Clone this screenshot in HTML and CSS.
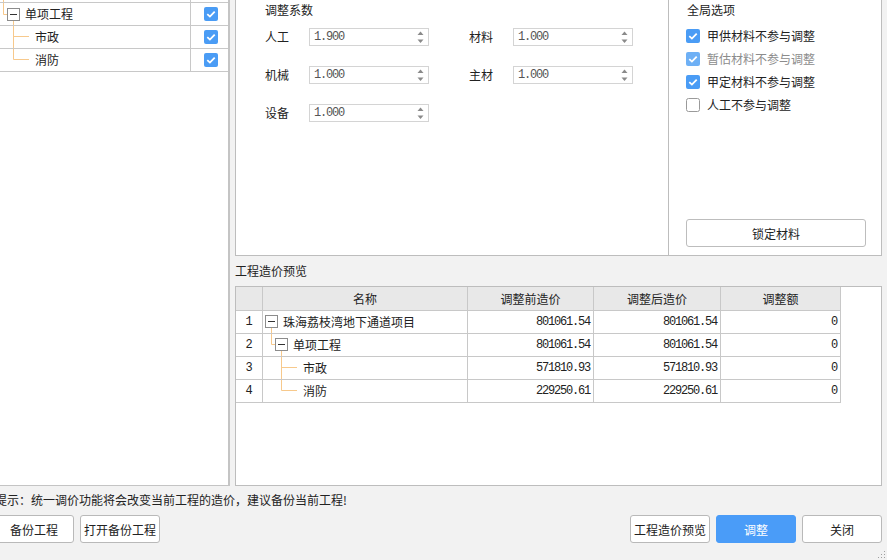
FILE: index.html
```html
<!DOCTYPE html>
<html lang="zh-CN">
<head>
<meta charset="utf-8">
<title>统一调价</title>
<link rel="stylesheet" href="styles.css">
</head>
<body>
<div class="main">
  <div class="tree-panel">
    <div class="trow first">
      <div class="tname"><svg class="tl" width="10" height="2" viewBox="0 0 10 2"><path d="M3.5 0V2" stroke="#f7c98c" fill="none"/></svg></div>
      <div class="tchk"></div>
    </div>
    <div class="trow">
      <div class="tname">
        <svg class="tl" width="25" height="22" viewBox="0 0 25 22"><path d="M3.5 0V11.5H7" stroke="#f7c98c" fill="none"/><path d="M13.5 18V22" stroke="#f7c98c" fill="none"/><rect x="7.5" y="5.5" width="12" height="12" fill="#fff" stroke="#8c8c8c"/><path d="M10 11.5H17" stroke="#333" fill="none"/></svg>
        <span>单项工程</span>
      </div>
      <div class="tchk"><svg class="cb" width="14" height="14" viewBox="0 0 14 14"><rect width="14" height="14" rx="2" fill="#4a9cf5"/><path d="M3.3 7.2L5.9 9.6L10.7 4.6" stroke="#fff" stroke-width="1.8" fill="none"/></svg></div>
    </div>
    <div class="trow">
      <div class="tname">
        <svg class="tl" width="35" height="22" viewBox="0 0 35 22"><path d="M13.5 0V22M13.5 10.5H29" stroke="#f7c98c" fill="none"/></svg>
        <span>市政</span>
      </div>
      <div class="tchk"><svg class="cb" width="14" height="14" viewBox="0 0 14 14"><rect width="14" height="14" rx="2" fill="#4a9cf5"/><path d="M3.3 7.2L5.9 9.6L10.7 4.6" stroke="#fff" stroke-width="1.8" fill="none"/></svg></div>
    </div>
    <div class="trow">
      <div class="tname">
        <svg class="tl" width="35" height="22" viewBox="0 0 35 22"><path d="M13.5 0V10.5H29" stroke="#f7c98c" fill="none"/></svg>
        <span>消防</span>
      </div>
      <div class="tchk"><svg class="cb" width="14" height="14" viewBox="0 0 14 14"><rect width="14" height="14" rx="2" fill="#4a9cf5"/><path d="M3.3 7.2L5.9 9.6L10.7 4.6" stroke="#fff" stroke-width="1.8" fill="none"/></svg></div>
    </div>
  </div>

  <div class="right">
    <div class="top-box">
      <div class="coef">
        <div class="title">调整系数</div>
        <div class="coef-grid">
          <span class="lbl">人工</span>
          <div class="num-input"><span class="val">1.900</span><svg class="spin" width="7" height="13" viewBox="0 0 7 13"><path d="M3.5 0.5L6.5 4H0.5Z" fill="#8a8a8a"/><path d="M0.5 8.5H6.5L3.5 12Z" fill="#8a8a8a"/></svg></div>
          <span></span>
          <span class="lbl">材料</span>
          <div class="num-input"><span class="val">1.000</span><svg class="spin" width="7" height="13" viewBox="0 0 7 13"><path d="M3.5 0.5L6.5 4H0.5Z" fill="#8a8a8a"/><path d="M0.5 8.5H6.5L3.5 12Z" fill="#8a8a8a"/></svg></div>

          <span class="lbl">机械</span>
          <div class="num-input"><span class="val">1.000</span><svg class="spin" width="7" height="13" viewBox="0 0 7 13"><path d="M3.5 0.5L6.5 4H0.5Z" fill="#8a8a8a"/><path d="M0.5 8.5H6.5L3.5 12Z" fill="#8a8a8a"/></svg></div>
          <span></span>
          <span class="lbl">主材</span>
          <div class="num-input"><span class="val">1.000</span><svg class="spin" width="7" height="13" viewBox="0 0 7 13"><path d="M3.5 0.5L6.5 4H0.5Z" fill="#8a8a8a"/><path d="M0.5 8.5H6.5L3.5 12Z" fill="#8a8a8a"/></svg></div>

          <span class="lbl">设备</span>
          <div class="num-input"><span class="val">1.000</span><svg class="spin" width="7" height="13" viewBox="0 0 7 13"><path d="M3.5 0.5L6.5 4H0.5Z" fill="#8a8a8a"/><path d="M0.5 8.5H6.5L3.5 12Z" fill="#8a8a8a"/></svg></div>
        </div>
      </div>
      <div class="global">
        <div class="title g">全局选项</div>
        <div class="opts">
          <div class="opt"><svg class="cb" width="14" height="14" viewBox="0 0 14 14"><rect width="14" height="14" rx="2" fill="#4a9cf5"/><path d="M3.3 7.2L5.9 9.6L10.7 4.6" stroke="#fff" stroke-width="1.8" fill="none"/></svg><span>甲供材料不参与调整</span></div>
          <div class="opt disabled"><svg class="cb" width="14" height="14" viewBox="0 0 14 14"><rect width="14" height="14" rx="2" fill="#6eb0f5"/><path d="M3.3 7.2L5.9 9.6L10.7 4.6" stroke="#fff" stroke-width="1.8" fill="none"/></svg><span>暂估材料不参与调整</span></div>
          <div class="opt"><svg class="cb" width="14" height="14" viewBox="0 0 14 14"><rect width="14" height="14" rx="2" fill="#4a9cf5"/><path d="M3.3 7.2L5.9 9.6L10.7 4.6" stroke="#fff" stroke-width="1.8" fill="none"/></svg><span>甲定材料不参与调整</span></div>
          <div class="opt"><svg class="cb" width="14" height="14" viewBox="0 0 14 14"><rect x="0.5" y="0.5" width="13" height="13" rx="2" fill="#fff" stroke="#9a9a9a"/></svg><span>人工不参与调整</span></div>
        </div>
        <button class="lock">锁定材料</button>
      </div>
    </div>

    <div class="section-label">工程造价预览</div>

    <div class="table-box">
      <div class="grid">
        <div class="cell hd"></div>
        <div class="cell hd">名称</div>
        <div class="cell hd">调整前造价</div>
        <div class="cell hd">调整后造价</div>
        <div class="cell hd">调整额</div>

        <div class="cell no">1</div>
        <div class="cell name"><svg class="tl" width="20" height="22" viewBox="0 0 20 22"><path d="M8.5 17V22" stroke="#f7c98c" fill="none"/><rect x="2.5" y="4.5" width="12" height="12" fill="#fff" stroke="#8c8c8c"/><path d="M5 10.5H12" stroke="#333" fill="none"/></svg><span>珠海荔枝湾地下通道项目</span></div>
        <div class="cell money">801061.54</div>
        <div class="cell money">801061.54</div>
        <div class="cell money">0</div>

        <div class="cell no">2</div>
        <div class="cell name"><svg class="tl" width="30" height="22" viewBox="0 0 30 22"><path d="M8.5 0V10.5H12" stroke="#f7c98c" fill="none"/><path d="M18.5 17V22" stroke="#f7c98c" fill="none"/><rect x="12.5" y="4.5" width="12" height="12" fill="#fff" stroke="#8c8c8c"/><path d="M15 10.5H22" stroke="#333" fill="none"/></svg><span>单项工程</span></div>
        <div class="cell money">801061.54</div>
        <div class="cell money">801061.54</div>
        <div class="cell money">0</div>

        <div class="cell no">3</div>
        <div class="cell name"><svg class="tl" width="40" height="22" viewBox="0 0 40 22"><path d="M18.5 0V22M18.5 10.5H34" stroke="#f7c98c" fill="none"/></svg><span>市政</span></div>
        <div class="cell money">571810.93</div>
        <div class="cell money">571810.93</div>
        <div class="cell money">0</div>

        <div class="cell no">4</div>
        <div class="cell name"><svg class="tl" width="40" height="22" viewBox="0 0 40 22"><path d="M18.5 0V10.5H34" stroke="#f7c98c" fill="none"/></svg><span>消防</span></div>
        <div class="cell money">229250.61</div>
        <div class="cell money">229250.61</div>
        <div class="cell money">0</div>
      </div>
    </div>
  </div>
</div>

<div class="hint">提示：统一调价功能将会改变当前工程的造价，建议备份当前工程!</div>

<div class="footer">
  <button class="btn">备份工程</button>
  <button class="btn">打开备份工程</button>
  <span class="spacer"></span>
  <button class="btn">工程造价预览</button>
  <button class="btn primary">调整</button>
  <button class="btn">关闭</button>
</div>

<svg class="grip" width="8" height="8" viewBox="0 0 8 8"><g fill="#a0a0a0"><rect x="6" y="0" width="1" height="1"/><rect x="3" y="3" width="1" height="1"/><rect x="6" y="3" width="1" height="1"/><rect x="0" y="6" width="1" height="1"/><rect x="3" y="6" width="1" height="1"/><rect x="6" y="6" width="1" height="1"/></g></svg>
</body>
</html>
```

FILE: styles.css
```css
* { box-sizing: border-box; }

html, body { margin: 0; padding: 0; }

body {
  width: 887px;
  height: 560px;
  overflow: hidden;
  position: relative;
  background: #f2f2f2;
  font-family: "Noto Sans CJK SC", "Microsoft YaHei", sans-serif;
  font-size: 12px;
  color: #222;
}

.main {
  display: flex;
  gap: 5px;
  height: 486px;
}

/* left tree */
.tree-panel {
  width: 230px;
  height: 486px;
  background: #fff;
  border-right: 2px solid #c4c4c4;
  border-bottom: 1px solid #c4c4c4;
}
.trow {
  display: flex;
  height: 23px;
  border-bottom: 1px solid #c8c8c8;
}
.trow.first { height: 3px; }
.tname {
  width: 191px;
  border-right: 1px solid #c8c8c8;
  display: flex;
  align-items: center;
  white-space: nowrap;
}
.tname span { line-height: 22px; }
.tchk {
  flex: 1;
  display: flex;
  align-items: center;
  justify-content: center;
  padding-left: 2px;
}
.tl { display: block; flex: none; }
.cb { display: block; flex: none; }

/* right side */
.right {
  width: 647px;
  display: flex;
  flex-direction: column;
}
.top-box {
  height: 257px;
  margin-top: -1px;
  border: 1px solid #bdbdbd;
  background: #fff;
  display: flex;
}
.coef {
  width: 433px;
  border-right: 1px solid #bdbdbd;
  padding-left: 29px;
}
.title {
  height: 20px;
  line-height: 20px;
  color: #222;
}
.title.g { padding-left: 1px; }
.coef-grid {
  margin-top: 8px;
  display: grid;
  grid-template-columns: 44px 120px 40px 44px 120px;
  grid-auto-rows: 18px;
  row-gap: 20px;
}
.lbl {
  line-height: 18px;
  color: #222;
}
.num-input {
  height: 18px;
  border: 1px solid #d4d4d4;
  background: #fff;
  display: flex;
  align-items: center;
  padding-left: 4px;
  padding-right: 4px;
}
.val {
  flex: 1;
  font-family: "Liberation Mono", "DejaVu Sans Mono", monospace;
  font-size: 12px;
  letter-spacing: -1.2px;
  color: #555;
}
.spin { display: block; margin-top: 1px; }

.global {
  flex: 1;
  display: flex;
  flex-direction: column;
  padding: 0 15px 8px 17px;
}
.opts { margin-top: 4px; }
.opt {
  height: 23px;
  display: flex;
  align-items: center;
  gap: 7px;
  color: #222;
}
.opt.disabled { color: #8c8c8c; }
.lock {
  margin-top: auto;
  width: 180px;
  height: 28px;
  background: #fff;
  border: 1px solid #bdbdbd;
  border-radius: 3px;
  font: inherit;
  color: #222;
  padding: 0;
}

.section-label {
  height: 30px;
  line-height: 30px;
  color: #222;
}

.table-box {
  height: 200px;
  border: 1px solid #bdbdbd;
  background: #fff;
}
.grid {
  display: grid;
  grid-template-columns: 27px 205px 126px 127px 120px;
  width: 605px;
}
.cell {
  height: 23px;
  border-right: 1px solid #c8c8c8;
  border-bottom: 1px solid #c8c8c8;
  display: flex;
  align-items: center;
  white-space: nowrap;
}
.cell.hd {
  height: 24px;
  background: #e8e8e8;
  justify-content: center;
  color: #222;
}
.cell.no {
  justify-content: center;
  font-family: "Liberation Mono", "DejaVu Sans Mono", monospace;
  font-size: 12px;
  color: #222;
}
.cell.money {
  justify-content: flex-end;
  padding-right: 3px;
  font-family: "Liberation Mono", "DejaVu Sans Mono", monospace;
  font-size: 12px;
  letter-spacing: -1.2px;
  color: #222;
}
.cell.name span { line-height: 22px; }

/* footer */
.hint {
  margin: 4px 0 0 -5px;
  height: 20px;
  line-height: 20px;
  white-space: nowrap;
  color: #222;
}
.footer {
  display: flex;
  gap: 6px;
  margin-top: 5px;
  margin-left: -6px;
  padding-right: 5px;
}
.spacer { flex: 1; }
.btn {
  width: 80px;
  height: 28px;
  padding: 0;
  background: #fff;
  border: 1px solid #b9b9b9;
  border-radius: 3px;
  font: inherit;
  color: #222;
  white-space: nowrap;
}
.btn.primary {
  background: #4a9cf8;
  border-color: #4a9cf8;
  color: #fff;
}

.grip {
  position: absolute;
  right: 1px;
  bottom: 1px;
}
```
